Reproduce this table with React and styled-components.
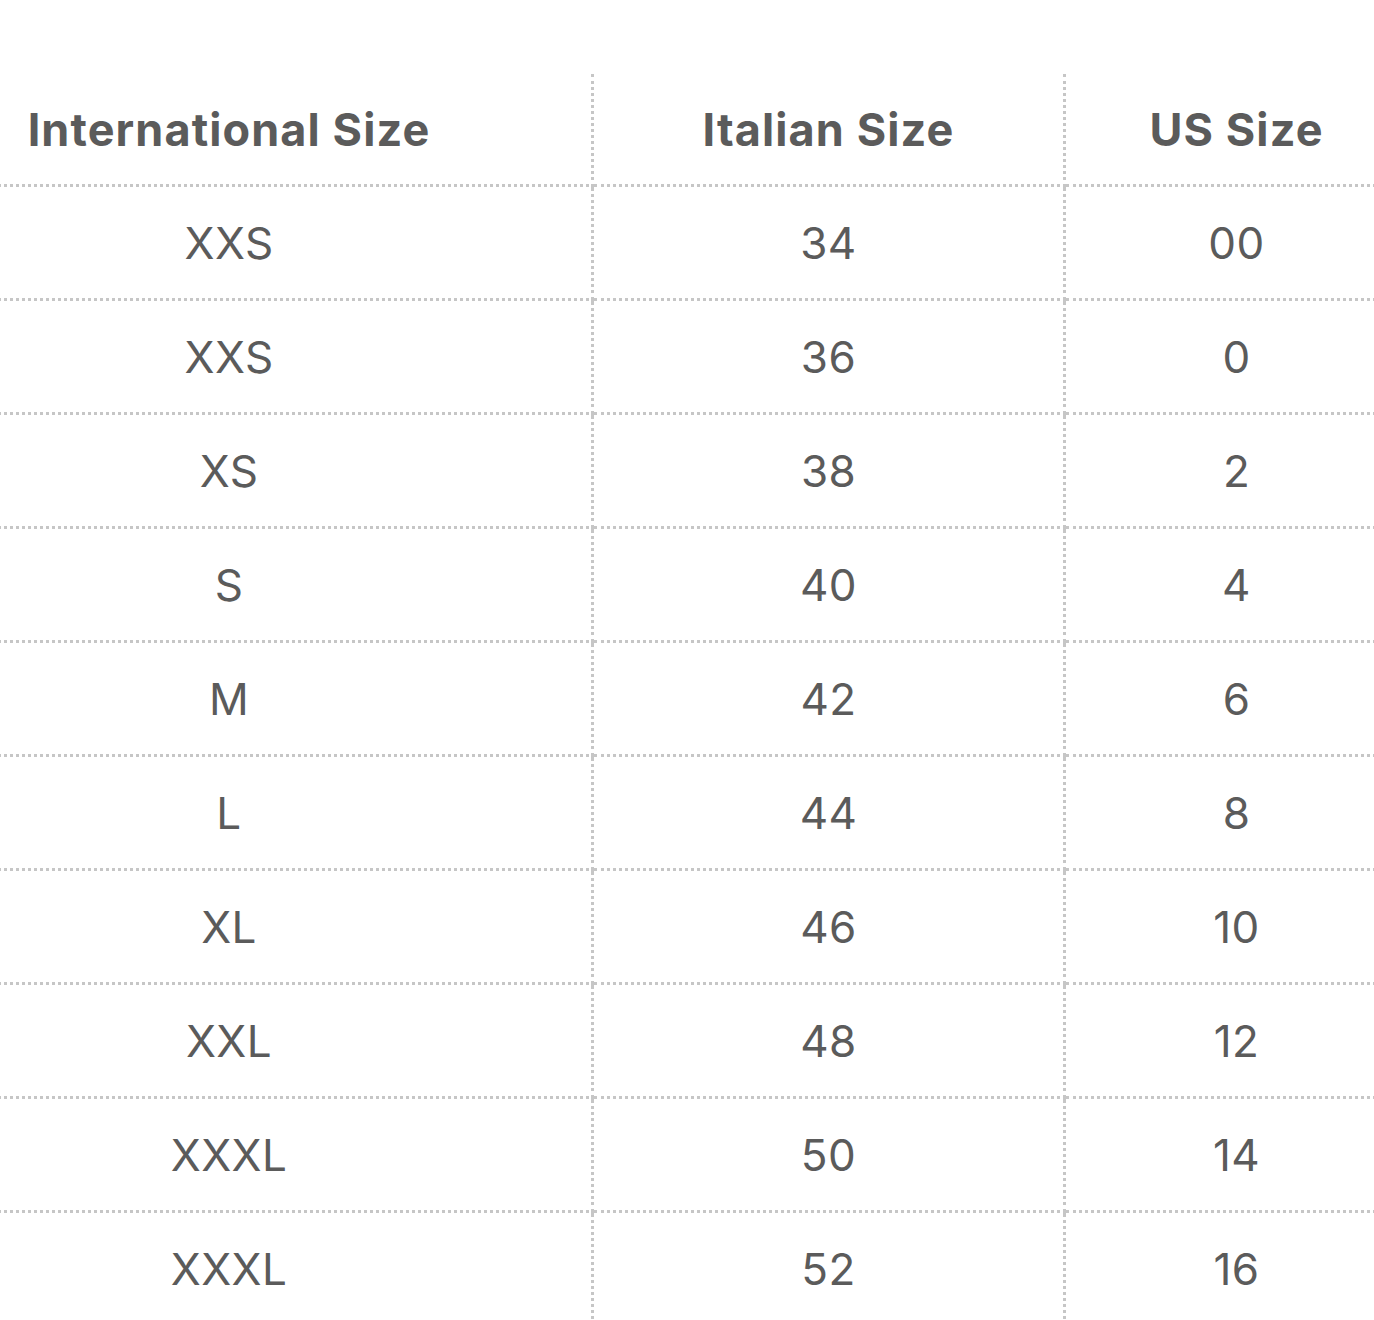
import React from "react";
import styled, { createGlobalStyle } from "styled-components";

const GlobalStyle = createGlobalStyle`
  html, body {
    margin: 0;
    padding: 0;
    background: #ffffff;
  }
  body {
    font-family: "Inter", "Open Sans", "Liberation Sans", sans-serif;
    color: #5b5b5b;
  }
`;

const Viewport = styled.div`
  width: 1374px;
  overflow: hidden;
  padding-top: 74px;
  background: #fff;
`;

const Table = styled.div`
  display: grid;
  grid-template-columns: 727px 472px 1fr;
  width: 1540px;
  margin-left: -133px;
`;

const Cell = styled.div`
  display: flex;
  align-items: center;
  justify-content: center;
  height: ${(p) => (p.$head ? "110px" : "111px")};
  border-bottom: 3px dotted #c6c6c6;
  border-right: ${(p) => (p.$last ? "none" : "3px dotted #c6c6c6")};
  font-size: ${(p) => (p.$head ? "45px" : "44px")};
  font-weight: ${(p) => (p.$head ? 700 : 400)};
  letter-spacing: ${(p) => (p.$head ? "1.1px" : "0.4px")};
  color: #5b5b5b;
  white-space: nowrap;
`;

const headers = ["International Size", "Italian Size", "US Size"];
const rows = [
  ["XXS", "34", "00"],
  ["XXS", "36", "0"],
  ["XS", "38", "2"],
  ["S", "40", "4"],
  ["M", "42", "6"],
  ["L", "44", "8"],
  ["XL", "46", "10"],
  ["XXL", "48", "12"],
  ["XXXL", "50", "14"],
  ["XXXL", "52", "16"],
];

export default function App() {
  return (
    <>
      <GlobalStyle />
      <Viewport>
        <Table>
          {headers.map((h, i) => (
            <Cell key={h} $head $last={i === 2}>
              {h}
            </Cell>
          ))}
          {rows.map((r, ri) =>
            r.map((v, ci) => (
              <Cell key={`${ri}-${ci}`} $last={ci === 2}>
                {v}
              </Cell>
            ))
          )}
        </Table>
      </Viewport>
    </>
  );
}
